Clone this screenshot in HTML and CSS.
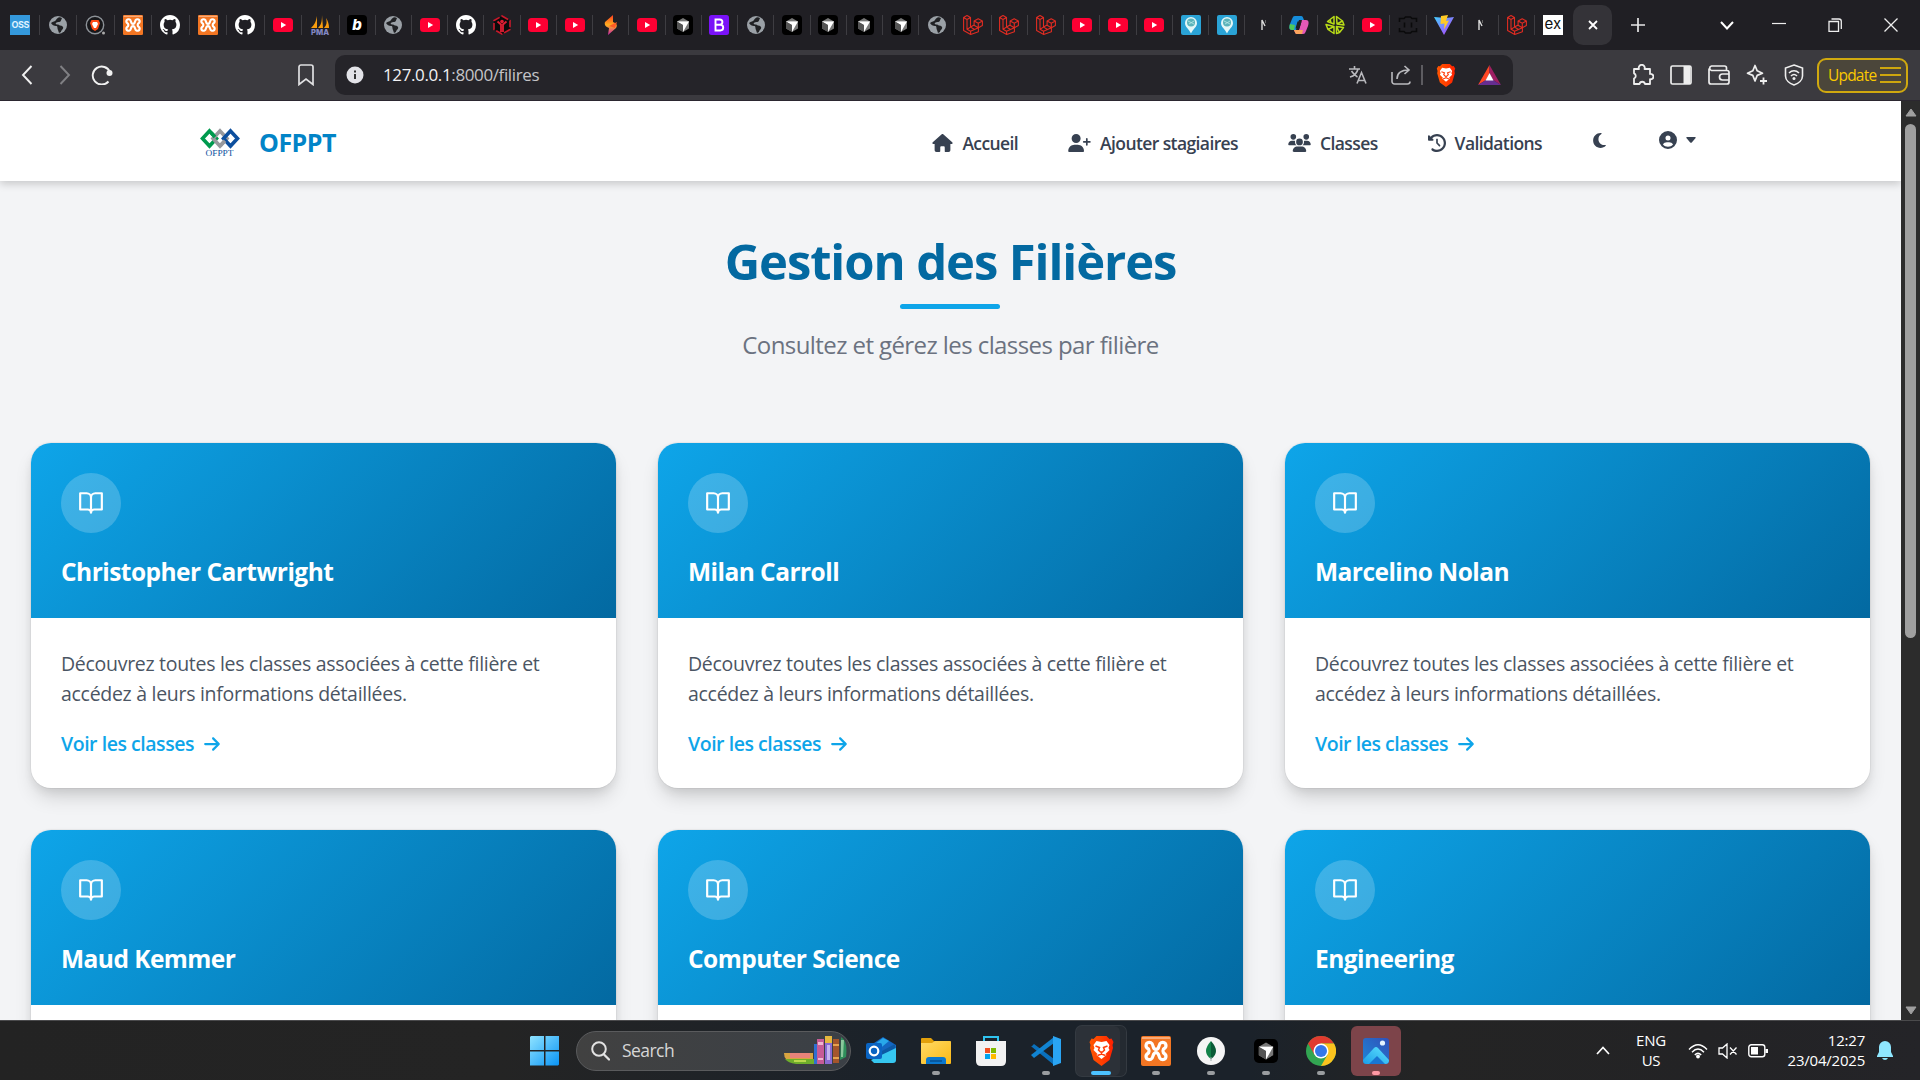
FILE: index.html
```html
<!DOCTYPE html>
<html lang="fr">
<head>
<meta charset="utf-8">
<title>Gestion des Filières</title>
<link rel="stylesheet" href="styles.css">
</head>
<body>
<svg class="defs" width="0" height="0">
  <defs>
    <linearGradient id="gViteB" x1="0" y1="0" x2="1" y2="1"><stop offset="0" stop-color="#41d1ff"/><stop offset="1" stop-color="#bd34fe"/></linearGradient>
    <linearGradient id="gFlame" x1="0" y1="0" x2="0" y2="1"><stop offset="0" stop-color="#ff3b1f"/><stop offset=".5" stop-color="#ffb01f"/><stop offset="1" stop-color="#c822b0"/></linearGradient>
    <linearGradient id="gBrave" x1="0" y1="0" x2="1" y2="0"><stop offset="0" stop-color="#ff5601"/><stop offset=".5" stop-color="#ff4000"/><stop offset="1" stop-color="#ff1f01"/></linearGradient>
    <linearGradient id="gWin" x1="0" y1="0" x2="1" y2="1"><stop offset="0" stop-color="#8fe3ff"/><stop offset="1" stop-color="#0a94f5"/></linearGradient>
    <linearGradient id="gFolder" x1="0" y1="0" x2="1" y2="1"><stop offset="0" stop-color="#ffda66"/><stop offset="1" stop-color="#fbb915"/></linearGradient>
    <linearGradient id="gPhoto" x1="1" y1="0" x2="0" y2="1"><stop offset="0" stop-color="#3150b8"/><stop offset="1" stop-color="#1d86d8"/></linearGradient>
    <linearGradient id="gHill" x1="0" y1="1" x2="1" y2="0"><stop offset="0" stop-color="#1b9de8"/><stop offset="1" stop-color="#5fe3ff"/></linearGradient>
  </defs>
  <symbol id="globe" viewBox="0 0 20 20"><circle cx="10" cy="10" r="9" fill="#9aa0a6"/><path fill="#202124" d="M3 8c1 2 3 3 5 3 2 0 1 2 2 4l1 3 2-1c0-2 3-3 2-5s-3-1-4-2-2 0-3-1 1-2 3-2 2-2 3-4C11 1 9 3 8 5S5 6 3 8z"/></symbol>
  <symbol id="bravetab" viewBox="0 0 20 20"><circle cx="10" cy="10" r="8.700" fill="#17171a" stroke="#8d9298" stroke-width="1.400"/><path fill="#ff4a16" d="M6.500 5h7l1.500 3-2 6-3 2-3-2-2-6z"/><path fill="#fff" d="M8 7h4l1 2-2 4H9L7 9z"/><circle cx="18.500" cy="18" r="1.500" fill="#aaa"/></symbol>
  <symbol id="xampp" viewBox="0 0 30 30"><rect width="30" height="30" rx="2" fill="#f37623"/><path fill="#f9ab78" d="M1 1h28v2H1z"/><path fill="none" stroke="#fff" stroke-width="3.200" stroke-linejoin="round" d="M10 6.800C4.500 5 3.500 11 7.500 13L8 15l-.5 2C3.500 19 4.500 25 10 23.200C13 22.200 11 16.600 15 16.600S17 22.200 20 23.200C25.500 25 26.500 19 22.500 17L22 15l.5-2C26.500 11 25.500 5 20 6.800C17 7.800 19 13.400 15 13.400S13 7.800 10 6.800z"/></symbol>
  <symbol id="github" viewBox="0 0 16 16"><path fill="#fff" d="M8 0C3.580 0 0 3.580 0 8c0 3.540 2.290 6.530 5.470 7.590.4.070.55-.17.55-.38 0-.19-.01-.82-.01-1.490-2.010.37-2.530-.49-2.690-.94-.09-.23-.48-.94-.82-1.130-.28-.15-.68-.52-.01-.53.63-.01 1.080.58 1.230.82.72 1.210 1.870.87 2.330.66.070-.52.28-.87.51-1.070-1.780-.2-3.640-.89-3.640-3.950 0-.87.31-1.590.82-2.150-.08-.2-.36-1.020.08-2.120 0 0 .67-.21 2.200.82a7.600 7.600 0 0 1 4 0c1.530-1.040 2.200-.82 2.200-.82.44 1.100.16 1.920.08 2.120.51.56.82 1.270.82 2.150 0 3.070-1.870 3.750-3.650 3.950.29.25.54.73.54 1.480 0 1.070-.01 1.930-.01 2.200 0 .21.15.46.55.38A8 8 0 0 0 16 8c0-4.420-3.580-8-8-8z"/></symbol>
  <symbol id="yt" viewBox="0 0 20 20"><rect y="3" width="20" height="14" rx="3.500" fill="#ff0033"/><path fill="#fff" d="M8 7v6l5.200-3z"/></symbol>
  <symbol id="redhex" viewBox="0 0 20 20"><path fill="#0b0b0b" stroke="#c9192b" stroke-width="1.600" stroke-dasharray="7 2" d="M10 1l8 4.500v9L10 19l-8-4.500v-9z"/><path fill="none" stroke="#e01e33" stroke-width="1.800" d="M5.500 6.500L9 9.500V17M14.500 6.500L11 9.500V17"/><circle cx="10" cy="6.500" r="1.800" fill="#e01e33"/></symbol>
  <symbol id="flame" viewBox="0 0 20 20"><path fill="url(#gFlame)" d="M12 0L4 7c-1 3 1 5 4 6l-1 7 8-7c2-3 0-5-3-6z"/><path fill="#ff5a26" d="M16 7l-8 4 6 2z"/></symbol>
  <symbol id="cursor" viewBox="0 0 20 20"><rect width="20" height="20" rx="4" fill="#000"/><path fill="#777" d="M10 3l6 3.500v7L10 17l-6-3.500v-7z"/><path fill="#bbb" d="M4 6.500h12L10 10z"/><path fill="#fff" d="M16 6.500L10 17v-7L4 6.500z"/><path fill="#555" d="M4 6.500l6 3.500v7l-6-3.500z"/></symbol>
  <symbol id="boot" viewBox="0 0 20 20"><rect width="20" height="20" rx="2.500" fill="#7a12f8"/><path fill="none" stroke="#fff" stroke-width="1.900" d="M6.500 4.500h4.300a2.500 2.500 0 0 1 0 5.200H6.500h4.800a2.800 2.800 0 0 1 0 5.800H6.500z"/></symbol>
  <symbol id="laravel" viewBox="0 0 20 20"><path fill="none" stroke="#e02c22" stroke-width="1.100" stroke-linejoin="round" d="M.6 2.500L4 .6l3.500 1.900v9.600l3.600-2V6L15.200 3.800 19.400 6v4.500l-4 2.200v4L7.700 19.400.6 15.500zM.6 2.500L4 4.500l3.500-2M4 4.500v9.800l3.500 2 7.900-3.600M7.500 12.100L4 14.300M7.600 16.300v3.100M11.100 6l4.200 2.300L19.400 6M15.300 8.300v4.400l-4.200-2.500M7.500 12.100l3.700 2.200"/></symbol>
  <symbol id="pin" viewBox="0 0 20 20"><rect width="20" height="20" rx="2" fill="#2aa3d6"/><path fill="#e4f7f7" d="M10 2a6 6 0 0 1 6 6c0 4-4 6-6 10.500C8 14 4 12 4 8a6 6 0 0 1 6-6z"/><circle cx="10" cy="7.500" r="4" fill="#5bb3ba"/><path fill="none" stroke="#b9e8e5" stroke-width=".8" d="M7 6l6 3M8 9l5-3"/></symbol>
  <symbol id="ntab" viewBox="0 0 20 20"><path fill="none" stroke="#ddd" stroke-width="1.400" d="M9 15V5l3 6"/><path stroke="#666" stroke-width="1" d="M12.500 5v3"/></symbol>
  <symbol id="copilot" viewBox="0 0 20 20"><path fill="#168ddb" d="M6 1h6c2 0 2 2 3 4H10L7 15H3c-3 0-3-3-2-6l2-5c1-2 1-3 3-3z"/><path fill="#50c95a" d="M1 9l5 1-1 5H3c-3 0-3-3-2-6z"/><path fill="#e458b7" d="M14 19H8c-2 0-2-2-3-4h5l3-10h4c3 0 3 3 2 6l-2 5c-1 2-1 3-3 3z"/><path fill="#fba45b" d="M5 15h9l-1 4H8c-2 0-2-2-3-4z"/><path fill="#202024" d="M8.500 6.500h4l-2 7h-4z"/></symbol>
  <symbol id="lime" viewBox="0 0 20 20"><path fill="none" stroke="#b9dc17" stroke-width="1.500" stroke-linejoin="round" d="M9 1.500v7.500L2.500 6.500zM5 4l1 4M11.500 1.500L17.500 6l-5.500 3zM17.500 6l1.500 4-7-1M1 9.500l8 2-6 3zM3 14.500l6 4v-7M11.500 11.500v7l3-1zM11.500 11.500l7 1-4 5"/></symbol>
  <symbol id="mask" viewBox="0 0 20 20"><path fill="none" stroke="#0a0a0b" stroke-width="1.600" d="M1.500 7V3.500H6l1.500-1.500h5L14 3.500h4.500V7M1.500 13v3.500H6l1.500 1.500h5l1.500-1.500h4.500V13M6.500 7.500v5M13.500 7.500v5"/></symbol>
  <symbol id="vite" viewBox="0 0 20 20"><path fill="url(#gViteB)" d="M0 2l10 18L20 2l-8 1z"/><path fill="#ffca25" d="M7 1l7-1-2 6 3-.500-5 9 .5-6-4 .5z"/></symbol>
  <symbol id="brave" viewBox="0 0 24 30"><path fill="url(#gBrave)" d="M7 0h10l3 3 2-.5L24 6l-1 3 .5 3-3.500 12L12 30l-8-6L.5 12 1 9 0 6l2-3.500L4 3z"/><path fill="#fff" d="M12 6l5-1 3 4-1 3 1 2-4 4 1 1-5 4-5-4 1-1-4-4 1-2-1-3 3-4z"/><path fill="none" stroke="#ff3d0a" stroke-width="1.500" d="M6 10l4 1.500L9 14l2 2h2l2-2-1-2.500 4-1.500M12 16v2.500M8 19.500l4-1.500 4 1.500"/></symbol>
  <symbol id="book" viewBox="0 0 24 24"><path fill="none" stroke="#fff" stroke-width="2" stroke-linecap="round" stroke-linejoin="round" d="M2 3h6a4 4 0 0 1 4 4v14a3 3 0 0 0-3-3H2zM22 3h-6a4 4 0 0 0-4 4v14a3 3 0 0 1 3-3h7z"/></symbol>
  <symbol id="arrow" viewBox="0 0 448 512"><path fill="currentColor" d="M438.600 278.600c12.500-12.500 12.500-32.800 0-45.300l-160-160c-12.500-12.500-32.800-12.500-45.300 0s-12.500 32.800 0 45.300L338.800 224 32 224c-17.700 0-32 14.300-32 32s14.300 32 32 32l306.700 0L233.400 393.400c-12.500 12.500-12.500 32.800 0 45.300s32.800 12.500 45.300 0l160-160z"/></symbol>
</svg>

<div class="tabs">
  <div class="tab-strip">
    <i><b class="oss">OSS</b></i><i><svg><use href="#globe"/></svg></i><i><svg><use href="#bravetab"/></svg></i><i><svg><use href="#xampp"/></svg></i><i><svg><use href="#github"/></svg></i><i><svg><use href="#xampp"/></svg></i><i><svg><use href="#github"/></svg></i><i><svg><use href="#yt"/></svg></i><i><svg viewBox="0 0 20 20"><path fill="#f89c0e" d="M7 1C6 7 4 10 1 13h6zM12 0c0 7-1 10-4 13h5zM16 3c1 4 1 7-2 10h5c0-4-1-7-3-10z"/><text x="10" y="19.500" text-anchor="middle" textLength="18" lengthAdjust="spacingAndGlyphs" font-family="Inter,sans-serif" font-weight="800" font-size="8" fill="#8488c4">PMA</text></svg></i>
    <i><b class="btab">b</b></i><i><svg><use href="#globe"/></svg></i><i><svg><use href="#yt"/></svg></i><i><svg><use href="#github"/></svg></i><i><svg><use href="#redhex"/></svg></i><i><svg><use href="#yt"/></svg></i><i><svg><use href="#yt"/></svg></i><i><svg><use href="#flame"/></svg></i><i><svg><use href="#yt"/></svg></i><i><svg><use href="#cursor"/></svg></i><i><svg><use href="#boot"/></svg></i><i><svg><use href="#globe"/></svg></i><i><svg><use href="#cursor"/></svg></i><i><svg><use href="#cursor"/></svg></i><i><svg><use href="#cursor"/></svg></i><i><svg><use href="#cursor"/></svg></i><i><svg><use href="#globe"/></svg></i><i><svg><use href="#laravel"/></svg></i><i><svg><use href="#laravel"/></svg></i><i><svg><use href="#laravel"/></svg></i><i><svg><use href="#yt"/></svg></i><i><svg><use href="#yt"/></svg></i><i><svg><use href="#yt"/></svg></i><i><svg><use href="#pin"/></svg></i><i><svg><use href="#pin"/></svg></i><i><svg><use href="#ntab"/></svg></i><i><svg><use href="#copilot"/></svg></i><i><svg><use href="#lime"/></svg></i><i><svg><use href="#yt"/></svg></i><i><svg><use href="#mask"/></svg></i><i><svg><use href="#vite"/></svg></i><i><svg><use href="#ntab"/></svg></i><i><svg><use href="#laravel"/></svg></i><i class="last"><b class="ex">ex</b></i>
  </div>
  <div class="active-tab"><svg width="10" height="10" viewBox="0 0 10 10"><path d="M1 1l8 8M9 1L1 9" stroke="#fff" stroke-width="1.800"/></svg></div>
  <svg class="new-tab" width="14" height="14" viewBox="0 0 14 14"><path d="M7 0v14M0 7h14" stroke="#e6e6e6" stroke-width="1.700"/></svg>
  <div class="win-buttons">
    <svg width="14" height="9" viewBox="0 0 14 9"><path d="M1 1l6 6.500L13 1" fill="none" stroke="#fff" stroke-width="2"/></svg>
    <svg width="14" height="14" viewBox="0 0 14 14"><path d="M0 5.500h14" stroke="#eee" stroke-width="1.200"/></svg>
    <svg width="14" height="14" viewBox="0 0 14 14"><path d="M1 3.500h9.500v10H1zM3.500 1H11a2.300 2.300 0 0 1 2.300 2.300V11" fill="none" stroke="#eee" stroke-width="1.300"/></svg>
    <svg width="14" height="14" viewBox="0 0 14 14"><path d="M.5.5l13 13M13.500.5l-13 13" stroke="#eee" stroke-width="1.300"/></svg>
  </div>
</div>

<div class="toolbar">
  <div class="nav-left">
    <svg width="12" height="20" viewBox="0 0 12 20"><path d="M10.500 1L2 10l8.500 9" fill="none" stroke="#f1f1f1" stroke-width="1.900"/></svg>
    <svg width="12" height="20" viewBox="0 0 12 20"><path d="M1.500 1L10 10l-8.500 9" fill="none" stroke="#808084" stroke-width="1.900"/></svg>
    <svg class="reload" width="22" height="20" viewBox="0 0 22 20"><path d="M17.500 16.500A9 9 0 1 1 19 7" fill="none" stroke="#f1f1f1" stroke-width="1.900"/><circle cx="18.500" cy="8" r="3" fill="#f1f1f1"/></svg>
    <svg class="bookmark" width="16" height="22" viewBox="0 0 16 22"><path d="M1 3a2 2 0 0 1 2-2h10a2 2 0 0 1 2 2v17.500l-7-5.500-7 5.500z" fill="none" stroke="#e0e0e2" stroke-width="1.700"/></svg>
  </div>
  <div class="url">
    <svg width="18" height="18" viewBox="0 0 18 18"><circle cx="9" cy="9" r="8.500" fill="#e3e3e8"/><path d="M9 8v5M9 4.500v2" stroke="#333" stroke-width="2"/></svg>
    <span class="address"><b>127.0.0.1</b>:8000/filires</span>
    <div class="url-icons">
      <svg width="20" height="20" viewBox="0 0 20 20"><path d="M1 4h11M6.500 1v3M10 4c-1 4-4 7-8 8M3.500 6c2 3 4 5 6 6M9 18.500l4.500-11 4.500 11M10.500 15.500h6" fill="none" stroke="#b9b9bd" stroke-width="1.600"/></svg>
      <svg width="20" height="20" viewBox="0 0 20 20"><path d="M1 7v9.500A2.500 2.500 0 0 0 3.500 19h13a2.500 2.500 0 0 0 2.500-2.500M6 14c0-6 4-9 12-9M13.500 1L18 5l-4.500 4" fill="none" stroke="#b9b9bd" stroke-width="1.600"/></svg>
      <span class="divider"></span>
      <svg width="20" height="23"><use href="#brave"/></svg>
      <svg width="23" height="20" viewBox="0 0 23 20"><path fill="#ff4724" d="M11.500 0L0 20l8-5 3.500-7z"/><path fill="#9e1f63" d="M11.500 0L23 20l-8-5-3.500-7z"/><path fill="#662d91" d="M0 20h23l-8-5H8z"/><path fill="#fff" d="M11.500 8l4 7.500h-8z"/></svg>
    </div>
  </div>
  <div class="tool-right">
    <svg width="22" height="22" viewBox="0 0 22 22"><path d="M2 5h5a3 3 0 1 1 5.500 0H18v5a2.700 2.700 0 1 1 0 5.200V20h-5a2.800 2.800 0 0 0-5.500 0H2v-5.500a2.800 2.800 0 0 0 0-5.200z" fill="none" stroke="#eee" stroke-width="1.800" stroke-linejoin="round"/></svg>
    <svg width="22" height="20" viewBox="0 0 22 20"><rect x="1" y="1" width="20" height="18" rx="1.500" fill="none" stroke="#eee" stroke-width="1.700"/><path fill="#eee" d="M13.500 1H20v18h-6.500z"/></svg>
    <svg width="22" height="20" viewBox="0 0 22 20"><path d="M18.500 5.500V3a2 2 0 0 0-2-2H3.500a2.300 2.300 0 0 0 0 4.500H19a2 2 0 0 1 2 2V17a2 2 0 0 1-2 2H3a2 2 0 0 1-2-2V3.500M21 9h-6.500a3 3 0 0 0 0 6H21" fill="none" stroke="#eee" stroke-width="1.700"/></svg>
    <svg width="22" height="22" viewBox="0 0 22 22"><path d="M9 1.500l2.200 5.300 5.300 2.400-5.300 2.200L9 17l-2.200-5.600L1.500 9.200l5.300-2.400z" fill="none" stroke="#eee" stroke-width="1.700" stroke-linejoin="round"/><path d="M17.500 13.500v7M14 17h7" stroke="#eee" stroke-width="1.800"/></svg>
    <svg width="20" height="22" viewBox="0 0 20 22"><path d="M10 1l8.500 3v8c0 4-4 7.500-8.500 9-4.500-1.500-8.500-5-8.500-9V4zM5 9c3-3 7-3 10 0M7 12c2-2 4-2 6 0" fill="none" stroke="#eee" stroke-width="1.600"/><circle cx="10" cy="14.500" r="1.500" fill="#eee"/></svg>
    <div class="update"><span>Update</span><svg width="21" height="16" viewBox="0 0 21 16"><path d="M0 1h21M0 8h21M0 15h21" stroke="#fac800" stroke-width="1.700"/></svg></div>
  </div>
</div>

<div class="viewport">
  <div class="page">
    <header class="site-header">
      <div class="brand">
        <svg width="40" height="32" viewBox="0 0 40 32"><g fill="none" stroke-width="3.600"><path stroke="#009a4e" d="M9.500 3l7 7.500-7 7.500-7-7.500z"/><path stroke="#98999d" d="M20 3l7 7.500-7 7.500-7-7.500z"/><path stroke="#0d4f9e" d="M30.500 3l7 7.500-7 7.500-7-7.500z"/><path stroke="#98999d" d="M20 18l5-5.300"/><path stroke="#009a4e" d="M11 4.600l4 4.400"/></g><text x="19.500" y="27.500" text-anchor="middle" textLength="28" lengthAdjust="spacingAndGlyphs" font-family="Liberation Serif,serif" font-size="9" fill="#0d4f9e">OFPPT</text></svg>
        <span>OFPPT</span>
      </div>
      <nav>
        <a class="n1"><svg width="21" height="18" viewBox="0 0 576 512"><path d="M575.800 255.500c0 18-15 32.100-32 32.100h-32l.7 160.200c0 40-18 64-56 64H376c-22 0-24-18-24-24v-104c0-17.700-14.300-32-32-32h-64c-17.700 0-32 14.300-32 32v104c0 14-10 24-24 24h-80c-38 0-56-24-56-64V287.600H32c-18 0-32-14-32-32.100 0-9 3-17 10-24L266.400 8c7-7 15-8 22-8s15 2 21 7l255.400 224.500c8 7 12 15 11 24z"/></svg><span>Accueil</span></a>
        <a class="n2"><svg width="23" height="18" viewBox="0 0 640 512"><path d="M96 128a128 128 0 1 1 256 0 128 128 0 1 1-256 0zM0 482.300C0 383.800 79.800 304 178.300 304h91.400C368.200 304 448 383.800 448 482.300c0 16.400-13.300 29.700-29.700 29.700H29.700C13.300 512 0 498.700 0 482.300zM504 312v-64h-64c-13.300 0-24-10.700-24-24s10.700-24 24-24h64v-64c0-13.300 10.700-24 24-24s24 10.700 24 24v64h64c13.300 0 24 10.700 24 24s-10.700 24-24 24h-64v64c0 13.300-10.700 24-24 24s-24-10.700-24-24z"/></svg><span>Ajouter stagiaires</span></a>
        <a class="n3"><svg width="23" height="18" viewBox="0 0 640 512"><path d="M144 0a80 80 0 1 1 0 160 80 80 0 1 1 0-160zm368 0a80 80 0 1 1 0 160 80 80 0 1 1 0-160zM0 298.700C0 239.800 47.800 192 106.700 192h42.700c15.900 0 31 3.500 44.600 9.700-1.300 7.200-1.900 14.700-1.900 22.300 0 38.200 16.800 72.500 43.300 96H21.300C9.600 320 0 310.400 0 298.700zM405.300 320h-.7c26.600-23.500 43.300-57.800 43.300-96 0-7.600-.7-15-1.900-22.300 13.600-6.300 28.700-9.700 44.600-9.700h42.700C592.200 192 640 239.800 640 298.700c0 11.800-9.600 21.300-21.300 21.300zM224 224a96 96 0 1 1 192 0 96 96 0 1 1-192 0zM128 485.300C128 411.700 187.700 352 261.300 352h117.400C452.300 352 512 411.700 512 485.300c0 14.700-11.900 26.700-26.700 26.700H154.700c-14.700 0-26.700-11.900-26.700-26.700z"/></svg><span>Classes</span></a>
        <a class="n4"><svg width="18" height="18" viewBox="0 0 512 512"><path d="M75 75L41 41C25.900 25.900 0 36.600 0 57.900V168c0 13.300 10.700 24 24 24h110.100c21.400 0 32.100-25.900 17-41l-30.800-30.800C155 85.500 203 64 256 64c106 0 192 86 192 192s-86 192-192 192c-40.800 0-78.600-12.700-109.700-34.400-14.500-10.100-34.400-6.600-44.600 7.900s-6.600 34.400 7.900 44.600C151.200 495 201.700 512 256 512c141.400 0 256-114.600 256-256S397.400 0 256 0C185.300 0 121.300 28.700 75 75zm181 53c-13.300 0-24 10.700-24 24v104c0 6.400 2.500 12.500 7 17l72 72c9.400 9.400 24.600 9.400 33.900 0s9.400-24.600 0-33.900l-65-65V152c0-13.300-10.700-24-24-24z"/></svg><span>Validations</span></a>
        <a class="n5"><svg width="15" height="17" viewBox="0 0 384 512"><path d="M223.500 32C100 32 0 132.300 0 256s100 224 223.500 224c60.600 0 115.500-24.200 155.800-63.400 5-4.900 6.300-12.500 3.100-18.700s-10.100-9.700-17-8.500c-9.800 1.700-19.800 2.600-30.100 2.600-96.900 0-175.500-78.800-175.500-176 0-65.800 36-123.100 89.300-153.300 6.100-3.500 9.200-10.500 7.700-17.300s-7.300-11.900-14.300-12.500c-6.300-.5-12.600-.8-19-.8z"/></svg></a>
        <a class="n6"><svg width="18" height="18" viewBox="0 0 512 512"><path fill-rule="evenodd" d="M399 384.200C376.900 345.800 335.400 320 288 320h-64c-47.400 0-88.900 25.800-111 64.200 35.200 39.200 86.200 63.800 143 63.800s107.800-24.700 143-63.800zM0 256a256 256 0 1 1 512 0 256 256 0 1 1-512 0zm256 16a72 72 0 1 0 0-144 72 72 0 1 0 0 144z"/></svg><svg class="caret" width="10" height="6" viewBox="0 0 10 6"><path d="M1 0h8q1 0 .6 1L6 5.300q-1 1-2 0L.4 1Q0 0 1 0z"/></svg></a>
      </nav>
    </header>
    <main>
      <h1>Gestion des Filières</h1>
      <div class="rule"></div>
      <p class="lead">Consultez et gérez les classes par filière</p>
      <section class="grid">
        <article class="card"><div class="card-head"><div class="circle"><svg width="26" height="26"><use href="#book"/></svg></div><h2>Christopher Cartwright</h2></div><div class="card-body"><p>Découvrez toutes les classes associées à cette filière et<br>accédez à leurs informations détaillées.</p><a>Voir les classes<svg width="16" height="18"><use href="#arrow"/></svg></a></div></article>
        <article class="card"><div class="card-head"><div class="circle"><svg width="26" height="26"><use href="#book"/></svg></div><h2>Milan Carroll</h2></div><div class="card-body"><p>Découvrez toutes les classes associées à cette filière et<br>accédez à leurs informations détaillées.</p><a>Voir les classes<svg width="16" height="18"><use href="#arrow"/></svg></a></div></article>
        <article class="card"><div class="card-head"><div class="circle"><svg width="26" height="26"><use href="#book"/></svg></div><h2>Marcelino Nolan</h2></div><div class="card-body"><p>Découvrez toutes les classes associées à cette filière et<br>accédez à leurs informations détaillées.</p><a>Voir les classes<svg width="16" height="18"><use href="#arrow"/></svg></a></div></article>
        <article class="card"><div class="card-head"><div class="circle"><svg width="26" height="26"><use href="#book"/></svg></div><h2>Maud Kemmer</h2></div><div class="card-body"></div></article>
        <article class="card"><div class="card-head"><div class="circle"><svg width="26" height="26"><use href="#book"/></svg></div><h2>Computer Science</h2></div><div class="card-body"></div></article>
        <article class="card"><div class="card-head"><div class="circle"><svg width="26" height="26"><use href="#book"/></svg></div><h2>Engineering</h2></div><div class="card-body"></div></article>
      </section>
    </main>
  </div>
  <div class="scrollbar">
    <svg width="12" height="9" viewBox="0 0 12 9"><path fill="#9f9f9f" stroke="#9f9f9f" stroke-linejoin="round" d="M6 1l5 7H1z"/></svg>
    <div class="thumb"></div>
    <svg width="12" height="9" viewBox="0 0 12 9"><path fill="#9f9f9f" stroke="#9f9f9f" stroke-linejoin="round" d="M6 8l5-7H1z"/></svg>
  </div>
</div>

<footer class="taskbar">
  <div class="dock">
    <svg class="start" width="30" height="30" viewBox="0 0 30 30"><path fill="url(#gWin)" d="M1 0h13v14H0V1zM15.500 0H29v14H15.500zM0 15.500h14v14H0zM15.500 15.500H29v13l-1 1H15.500z"/></svg>
    <div class="search">
      <svg width="19" height="20" viewBox="0 0 19 20"><circle cx="8" cy="8" r="6.800" fill="none" stroke="#e2e2e2" stroke-width="2"/><path d="M13 13.500l5 5" stroke="#e2e2e2" stroke-width="2.300" stroke-linecap="round"/></svg>
      <span>Search</span>
      <svg class="books" width="63" height="29" viewBox="0 0 63 29"><path fill="#d9a441" d="M0 17h29v6H2q-2-2-2-6z"/><path fill="#e8837a" d="M6 17h20v5H6z"/><path fill="#6fae2b" d="M1 23h29v5H12Q4 27 1 23z"/><path fill="#b9d84c" d="M10 24h12v2H10z"/><path fill="#2f6fd0" d="M30 8h3v20h-3z"/><path fill="#c65b96" d="M33 3h7v25h-7z"/><path fill="#efb6cf" d="M34 6h5v3h-5zM34 22h5v2h-5z"/><path fill="#8a6bd1" d="M41 0h7v28h-7z"/><path fill="#e5b73f" d="M41 0h7v7h-7z"/><path fill="#c6b4ee" d="M43 9h3v15h-3z"/><path fill="#a4552c" d="M49 3h6v24h-6z"/><path fill="#e7a34e" d="M49 8h6v2h-6zM49 21h6v2h-6z"/><path fill="#2f8f5b" d="M57 1q7 4 5 20l-6 3z"/><path fill="#8bc79c" d="M57 4h3l-1 17h-2z"/></svg>
    </div>
    <div class="apps">
      <div class="app"><svg width="30" height="28" viewBox="0 0 30 28"><path fill="#1466c0" d="M5 8L17 0l13 8v10H5z"/><path fill="#28a8ea" d="M9 7l8-6 6 3-12 10z"/><path fill="#0c59a4" d="M14 15L29 7v4L15 20z"/><path fill="#36c7f0" d="M30 11v12q0 3-3 3H8l-3-3z"/><rect y="6" width="16" height="16" rx="2" fill="#0a64c2"/><circle cx="8" cy="14" r="4.300" fill="none" stroke="#fff" stroke-width="2.200"/></svg></div>
      <div class="app run"><svg width="30" height="28" viewBox="0 0 30 28"><path fill="#e2a00b" d="M0 2q0-1 1-1h9l3 3h15q2 0 2 2v5H0z"/><path fill="url(#gFolder)" d="M0 6h11l3-2h15q1 0 1 1v21q0 1-1 1H1q-1 0-1-1z"/><path fill="#0b78ce" d="M5 27v-4q0-3 3-3h14q3 0 3 3v4z"/><path stroke="#074f91" stroke-width="1.500" d="M9 24h12"/></svg></div>
      <div class="app"><svg width="30" height="30" viewBox="0 0 30 30"><path fill="none" stroke="#2fc3ef" stroke-width="2" d="M8 6V1h14v5"/><path fill="#f2f2f2" d="M0 5h30v20q0 5-5 5H5q-5 0-5-5z"/><path fill="#f25022" d="M9 12h5v5H9z"/><path fill="#7fba00" d="M15 12h5v5h-5z"/><path fill="#00a4ef" d="M9 18h5v5H9z"/><path fill="#ffb900" d="M15 18h5v5h-5z"/></svg></div>
      <div class="app run"><svg width="30" height="30" viewBox="0 0 30 30"><path fill="#0a70bc" d="M0 11l3-3 20 15v6L1 11z"/><path fill="#1184d2" d="M0 19l3 3L23 7V1z"/><path fill="#2aa5f4" d="M22 0l8 3v24l-8 3z"/></svg></div>
      <div class="app run current"><svg width="25" height="30"><use href="#brave"/></svg></div>
      <div class="app run"><svg width="30" height="30"><use href="#xampp"/></svg></div>
      <div class="app run"><svg width="28" height="28" viewBox="0 0 28 28"><circle cx="14" cy="14" r="14" fill="#f5f5f5"/><path fill="#13824a" d="M14 4q-10 11 0 18z"/><path fill="#0a5b37" d="M14 4q10 11 0 18z"/><path stroke="#9aa" d="M14 20v4"/></svg></div>
      <div class="app run"><svg width="24" height="24"><use href="#cursor"/></svg></div>
      <div class="app run"><svg width="30" height="30" viewBox="0 0 30 30"><circle cx="15" cy="15" r="15" fill="#32a552"/><path fill="#e03b2f" d="M2 7.500A15 15 0 0 1 28 7.500H15L8.500 18.700z"/><path fill="#fcc31e" d="M28 7.500A15 15 0 0 1 15 30l6.500-11.300L15 7.500z"/><circle cx="15" cy="15" r="7.500" fill="#fff"/><circle cx="15" cy="15" r="6" fill="#3577e8"/></svg></div>
      <div class="app run alert"><svg width="26" height="26" viewBox="0 0 26 26"><rect width="26" height="26" rx="3" fill="url(#gPhoto)"/><path fill="url(#gHill)" d="M0 22L11 10q2-2 4 0l11 12q0 4-4 4H4q-4 0-4-4z"/><path fill="#1976d2" d="M6 26l8-8 8 8z"/><circle cx="19.500" cy="5" r="2.600" fill="#e3f3ff"/></svg></div>
    </div>
  </div>
  <div class="tray">
    <svg class="up" width="14" height="9" viewBox="0 0 14 9"><path d="M1 8l6-6.500L13 8" fill="none" stroke="#fff" stroke-width="1.700"/></svg>
    <div class="lang">ENG<br>US</div>
    <div class="status">
      <svg width="20" height="16" viewBox="0 0 20 16"><path d="M1 6.500q9-9.500 18 0M4 9.300q6-6.500 12 0M6.800 12q3.200-3.500 6.400 0" fill="none" stroke="#fff" stroke-width="1.400"/><circle cx="10" cy="13.500" r="1.900" fill="#fff"/></svg>
      <svg width="20" height="16" viewBox="0 0 20 16"><path d="M1 5h3.500L9 1v14l-4.500-4H1zM12 4.500l6.500 7M18.500 4.500l-6.500 7" fill="none" stroke="#fff" stroke-width="1.300"/></svg>
      <svg width="20" height="14" viewBox="0 0 20 14"><rect x=".8" y=".8" width="16" height="12" rx="2.500" fill="none" stroke="#fff" stroke-width="1.400"/><path fill="#fff" d="M3 3h7v7.500H3zM17.500 5H20v4h-2.500z"/></svg>
    </div>
    <div class="clock">12:27<br>23/04/2025</div>
    <svg class="bell" width="16" height="19" viewBox="0 0 16 19"><path fill="#8fe7ff" d="M8 0a6 6 0 0 1 6 6v5l2 4v1H0v-1l2-4V6a6 6 0 0 1 6-6zM5 17h6q-1 2-3 2t-3-2z"/></svg>
  </div>
</footer>
</body>
</html>
```
FILE: styles.css
```css
* { box-sizing: border-box; }
body {
  margin: 0;
  width: 1920px;
  height: 1080px;
  overflow: hidden;
  display: flex;
  flex-direction: column;
  font-family: "Open Sans", "Noto Sans", sans-serif;
  background: #3b3a3f;
}
svg { display: block; flex: none; }
.defs { position: absolute; }

/* browser tab strip */
.tabs { height: 50px; background: #201f24; display: flex; align-items: center; padding-left: 2px; flex: none; }
.tab-strip { display: grid; grid-template-columns: repeat(9, 37.5px) repeat(34, 36.24px); }
.tab-strip i { height: 20px; display: flex; justify-content: center; border-right: 1px solid #3e3d42; font-style: normal; }
.tab-strip i.last { border-color: transparent; }
.tab-strip svg { width: 20px; height: 20px; }
.tab-strip b { width: 20px; height: 20px; line-height: 20px; text-align: center; }
.tab-strip .oss { background: #3498db; color: #dff1ff; font: 700 9px/20px Inter, sans-serif; letter-spacing: -.4px; }
.tab-strip .btab { background: #000; border-radius: 4px; color: #fff; font: italic 800 15px/19px Inter, sans-serif; }
.tab-strip .ex { background: #fff; color: #111; font: 400 15px/18px Inter, sans-serif; }
.active-tab { width: 39px; height: 40px; margin-left: 2px; border-radius: 10px; background: #343338; display: flex; align-items: center; justify-content: center; }
.new-tab { margin-left: 19px; }
.win-buttons { margin-left: auto; display: flex; align-items: center; gap: 42px; padding-right: 22px; }
.win-buttons svg:first-child { margin-right: -4px; }

/* browser toolbar */
.toolbar { height: 51px; flex: none; display: flex; align-items: center; background: #3b3a3f; border-bottom: 1px solid #2b2730; }
.nav-left { width: 335px; display: flex; align-items: center; padding-left: 21px; gap: 26px; }
.nav-left .reload { margin-left: -6px; }
.nav-left .bookmark { margin-left: auto; margin-right: 21px; }
.url { width: 1178px; height: 40px; border-radius: 10px; background: #252429; display: flex; align-items: center; padding: 0 12px 0 11px; }
.address { margin: -2px 0 0 19px; font-size: 17px; letter-spacing: -.38px; color: #c4c4c8; }
.address b { font-weight: 400; color: #f2f2f4; }
.url-icons { margin-left: auto; display: flex; align-items: center; }
.url-icons svg + svg { margin-left: 23px; }
.url-icons svg:last-child { margin-left: 22px; }
.divider { width: 2px; height: 20px; background: #5d5c61; margin: 0 13px 0 10px; }
.tool-right { display: flex; align-items: center; gap: 16px; margin-left: 119px; }
.update { width: 91px; height: 35px; border: 2px solid #d0a90f; border-radius: 9px; background: #4b463a; display: flex; align-items: center; justify-content: space-between; padding: 0 5px 0 9px; margin-left: -3px; }
.update span { font-size: 15.5px; letter-spacing: -.8px; color: #fac800; }

/* page */
.viewport { height: 919px; flex: none; display: flex; background: #f3f4f6; }
.page { width: 1901px; height: 919px; overflow: hidden; }
.site-header { height: 80px; background: #fff; display: flex; align-items: center; justify-content: space-between; padding: 0 205px 0 200px; box-shadow: 0 3px 8px rgba(0, 0, 0, .18); }
.brand { display: flex; align-items: center; gap: 19px; }
.brand span { font-size: 25px; font-weight: 700; letter-spacing: -.5px; color: #0284c7; line-height: 34px; padding-top: 2px; }
.brand svg { margin-top: 5px; }
.site-header nav { display: flex; align-items: center; gap: 50px; padding-top: 3px; }
.site-header a { display: flex; align-items: center; gap: 9px; font-size: 17.5px; font-weight: 600; letter-spacing: -.6px; color: #374151; line-height: 24px; }
.site-header a svg { fill: #374151; }
.site-header .n5 { margin: 0 2px 5px 0; }
.site-header .n6 { margin-bottom: 5px; }
main { padding: 45px 31px 0; }
h1 { margin: 0; text-align: center; font-size: 49px; line-height: 70px; letter-spacing: -1.1px; color: #0369a1; font-weight: 700; }
.rule { width: 100px; height: 5px; border-radius: 3px; background: #0ea5e9; margin: 8px auto 0; position: relative; left: -.5px; }
.lead { margin: 18px 0 0; text-align: center; font-size: 24px; line-height: 36px; color: #6b7280; letter-spacing: -.58px; }
.grid { margin-top: 80px; display: grid; grid-template-columns: repeat(3, 585px); gap: 42px; }
.card { height: 345px; border-radius: 20px; overflow: hidden; background: #fff; box-shadow: 0 12px 20px -4px rgba(0, 0, 0, .16), 0 4px 8px rgba(0, 0, 0, .06), 0 0 0 1px rgba(0, 0, 0, .04); }
.card-head { height: 175px; padding: 30px; background: linear-gradient(135deg, #0ea5e9, #0369a1); }
.circle { width: 60px; height: 60px; border-radius: 50%; background: rgba(255, 255, 255, .2); display: flex; align-items: center; justify-content: center; }
h2 { margin: 22px 0 0; font-size: 24.5px; line-height: 34px; font-weight: 700; letter-spacing: -.54px; color: #fff; }
.card-body { padding: 31px 30px; }
.card-body p { margin: 0; font-size: 19.5px; line-height: 30px; letter-spacing: -.29px; color: #4b5563; }
.card-body a { margin-top: 20px; display: flex; align-items: center; gap: 10px; font-size: 19.5px; line-height: 30px; font-weight: 600; letter-spacing: -.46px; color: #0ea5e9; }
.scrollbar { width: 19px; background: #2c2c2c; display: flex; flex-direction: column; align-items: center; padding: 7px 0 5px; }
.thumb { width: 11px; height: 514px; border-radius: 6px; background: #9f9f9f; margin: 7px 0 auto; }

/* taskbar */
.taskbar { height: 60px; flex: none; border-top: 1px solid #4a4a4c; background: linear-gradient(90deg, #232323 0, #242424 500px, #1b222a 900px, #1b222a 1250px, #242424 1420px, #232325 1700px, #242428); display: flex; justify-content: space-between; color: #fff; }
.dock { display: flex; align-items: center; padding-left: 530px; }
.search { width: 275px; height: 40px; margin-left: 16px; border-radius: 20px; border: 1px solid #5a5b5d; background: linear-gradient(90deg, #414141, #3b4046); display: flex; align-items: center; padding-left: 14px; }
.search span { margin: -2px 0 0 12px; font-size: 17.5px; letter-spacing: -.55px; color: #d6d6d6; }
.search .books { margin-left: auto; margin-right: 3px; }
.apps { display: flex; align-items: center; margin-left: 5px; gap: 5px; }
.app { position: relative; width: 50px; height: 50px; border-radius: 6px; display: flex; align-items: center; justify-content: center; }
.run::after { content: ""; position: absolute; left: 21px; bottom: 1px; width: 8px; height: 4px; border-radius: 2px; background: #9a9da0; }
.current { background: #2c3138; box-shadow: inset -6px 0 0 #242a31, 0 0 0 1px #343a41; }
.run.current::after { left: 15px; width: 20px; background: #4cc2ff; }
.alert { background: #7d444a; }
.run.alert::after { background: #ff99a4; }
.tray { display: flex; align-items: center; padding-right: 27px; font-size: 15px; line-height: 20px; letter-spacing: -.22px; }
.lang { width: 50px; text-align: center; margin: -2px 0 0 16px; }
.status { display: flex; align-items: center; gap: 10px; margin-left: 12px; }
.clock { width: 90px; margin: -2px 0 0 7px; text-align: right; }
.bell { margin-left: 12px; }
```
